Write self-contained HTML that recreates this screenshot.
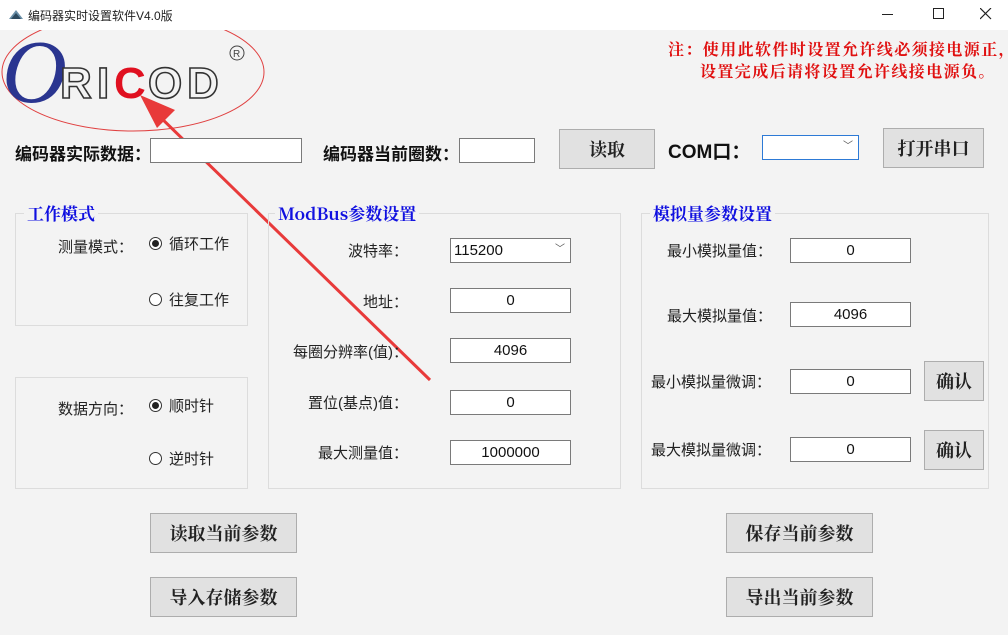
<!DOCTYPE html>
<html><head><meta charset="utf-8">
<style>
*{margin:0;padding:0;box-sizing:border-box}
body{width:1008px;height:635px;background:#f3f3f3;position:relative;overflow:hidden;font-family:"Liberation Sans","Noto Sans CJK SC",sans-serif;font-size:15px;color:#111}
.a{position:absolute;white-space:nowrap}
.title{left:0;top:0;width:1008px;height:30px;background:#fff}
.in{position:absolute;background:#fff;border:1px solid #7a7a7a;height:25px;text-align:center;line-height:23px;font-size:15px}
.btn{position:absolute;background:#e1e1e1;border:1px solid #adadad;text-align:center;font-family:"Noto Serif CJK SC",serif;font-weight:bold;font-size:18px;color:#222}
.grp{position:absolute;border:1px solid #dcdcdc}
.gt{position:absolute;background:#f3f3f3;color:#1010e0;font-family:"Noto Serif CJK SC",serif;font-weight:bold;font-size:17px;padding:0 3px;top:-12px;line-height:22px}
.lbl{font-size:15px;color:#222}
.r{position:absolute;width:13px;height:13px;border:1px solid #333;border-radius:50%;background:#fff}
.r.on::after{content:"";position:absolute;left:2px;top:2px;width:7px;height:7px;border-radius:50%;background:#222}
.bold{font-weight:bold;font-size:17px}
.note{color:#e01010;font-weight:bold;font-size:16px;letter-spacing:1.4px;font-family:'Noto Serif CJK SC',serif}
</style></head><body>
<div class="a title"></div>
<svg class="a" style="left:8px;top:7px" width="16" height="14"><path d="M1 12 L8 3 L15 12Z" fill="#6a8fa8"/><path d="M3 12 L8 6 L13 12Z" fill="#2d4a60"/></svg>
<div class="a" style="left:28px;top:7px;font-size:12px;color:#222">编码器实时设置软件V4.0版</div>
<div class="a" style="left:882px;top:14px;width:11px;height:1px;background:#222"></div>
<div class="a" style="left:933px;top:8px;width:11px;height:11px;border:1px solid #222"></div>
<svg class="a" style="left:980px;top:8px" width="12" height="12"><path d="M0 0L11 11M11 0L0 11" stroke="#222" stroke-width="1.2"/></svg>

<div class="a note" style="left:668px;top:37px">注：使用此软件时设置允许线必须接电源正，</div>
<div class="a note" style="left:700px;top:59px">设置完成后请将设置允许线接电源负。</div>

<svg class="a" style="left:0;top:30px" width="440" height="360">
<ellipse cx="133" cy="42" rx="131" ry="59" fill="none" stroke="#e04040" stroke-width="1"/>
<text x="2" y="72" font-family="Liberation Serif" font-style="italic" font-size="90" fill="#2a3590">O</text>
<g font-family="Liberation Sans" font-weight="bold" font-size="44" fill="#f3f3f3" stroke="#333" stroke-width="1.6">
<text x="60" y="68">R</text><text x="97" y="68">I</text>
<text x="148" y="68">O</text><text x="187" y="68">D</text></g>
<text x="114" y="68" font-family="Liberation Sans" font-weight="bold" font-size="44" fill="#e01020">C</text>
<circle cx="237" cy="23" r="7" fill="none" stroke="#444"/>
<text x="233" y="27" font-size="10" fill="#444" font-family="Liberation Sans">R</text>
<line x1="430" y1="350" x2="155" y2="82" stroke="#e83a3a" stroke-width="3"/>
<path d="M140 65 L175 80 L157 98Z" fill="#e83a3a"/>
</svg>

<div class="a bold" style="left:15px;top:140px">编码器实际数据：</div>
<div class="in" style="left:150px;top:138px;width:152px"></div>
<div class="a bold" style="left:323px;top:140px">编码器当前圈数：</div>
<div class="in" style="left:459px;top:138px;width:76px"></div>
<div class="btn" style="left:559px;top:129px;width:96px;height:40px;line-height:38px">读取</div>
<div class="a" style="left:668px;top:137px;font-weight:bold;font-size:19px">COM口：</div>
<div class="in" style="left:762px;top:135px;width:97px;border-color:#2d7ad6"><span style="position:absolute;right:5px;top:-1px;font-size:10px;color:#555">﹀</span></div>
<div class="btn" style="left:883px;top:128px;width:101px;height:40px;line-height:38px">打开串口</div>

<div class="grp" style="left:15px;top:213px;width:233px;height:113px"><div class="gt" style="left:8px">工作模式</div></div>
<div class="a lbl" style="left:58px;top:236px">测量模式：</div>
<div class="r on" style="left:149px;top:237px"></div><div class="a lbl" style="left:169px;top:233px">循环工作</div>
<div class="r" style="left:149px;top:293px"></div><div class="a lbl" style="left:169px;top:289px">往复工作</div>

<div class="grp" style="left:15px;top:377px;width:233px;height:112px"></div>
<div class="a lbl" style="left:58px;top:398px">数据方向：</div>
<div class="r on" style="left:149px;top:399px"></div><div class="a lbl" style="left:169px;top:395px">顺时针</div>
<div class="r" style="left:149px;top:452px"></div><div class="a lbl" style="left:169px;top:448px">逆时针</div>

<div class="grp" style="left:268px;top:213px;width:353px;height:276px"><div class="gt" style="left:6px">ModBus参数设置</div></div>
<div class="a lbl" style="right:600px;top:240px">波特率：</div>
<div class="in" style="left:450px;top:238px;width:121px;text-align:left;padding-left:3px">115200<span style="position:absolute;right:5px;top:-1px;font-size:10px;color:#555">﹀</span></div>
<div class="a lbl" style="right:600px;top:291px">地址：</div>
<div class="in" style="left:450px;top:288px;width:121px">0</div>
<div class="a lbl" style="right:600px;top:341px">每圈分辨率(值)：</div>
<div class="in" style="left:450px;top:338px;width:121px">4096</div>
<div class="a lbl" style="right:600px;top:392px">置位(基点)值：</div>
<div class="in" style="left:450px;top:390px;width:121px">0</div>
<div class="a lbl" style="right:600px;top:442px">最大测量值：</div>
<div class="in" style="left:450px;top:440px;width:121px">1000000</div>

<div class="grp" style="left:641px;top:213px;width:348px;height:276px"><div class="gt" style="left:8px">模拟量参数设置</div></div>
<div class="a lbl" style="left:667px;top:240px">最小模拟量值：</div>
<div class="in" style="left:790px;top:238px;width:121px">0</div>
<div class="a lbl" style="left:667px;top:305px">最大模拟量值：</div>
<div class="in" style="left:790px;top:302px;width:121px">4096</div>
<div class="a lbl" style="left:651px;top:371px">最小模拟量微调：</div>
<div class="in" style="left:790px;top:369px;width:121px">0</div>
<div class="a lbl" style="left:651px;top:439px">最大模拟量微调：</div>
<div class="in" style="left:790px;top:437px;width:121px">0</div>
<div class="btn" style="left:924px;top:361px;width:60px;height:40px;line-height:38px">确认</div>
<div class="btn" style="left:924px;top:430px;width:60px;height:40px;line-height:38px">确认</div>

<div class="btn" style="left:150px;top:513px;width:147px;height:40px;line-height:38px">读取当前参数</div>
<div class="btn" style="left:150px;top:577px;width:147px;height:40px;line-height:38px">导入存储参数</div>
<div class="btn" style="left:726px;top:513px;width:147px;height:40px;line-height:38px">保存当前参数</div>
<div class="btn" style="left:726px;top:577px;width:147px;height:40px;line-height:38px">导出当前参数</div>
</body></html>
